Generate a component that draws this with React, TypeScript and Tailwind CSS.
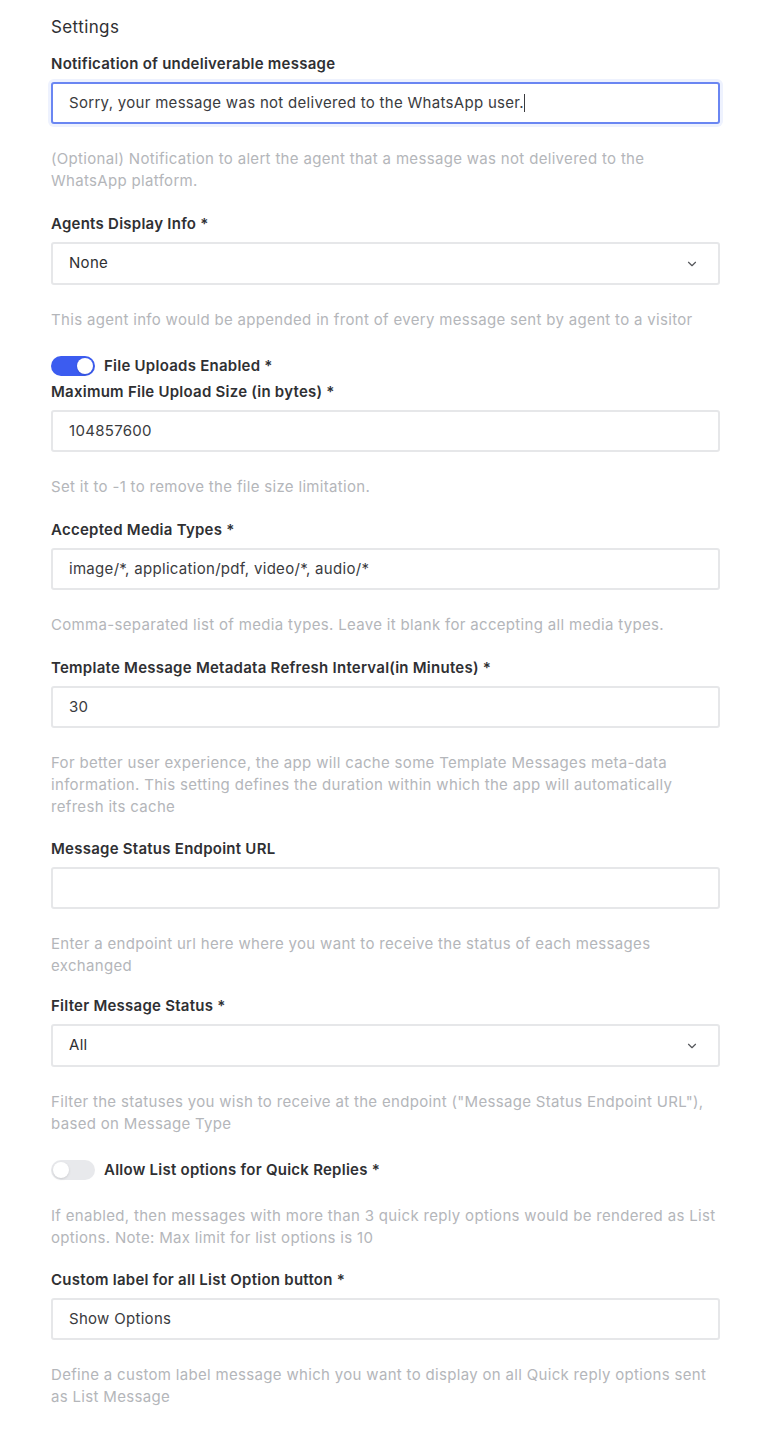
import { ChevronDown } from 'lucide-react';

interface FieldProps {
  label: string;
  help?: string;
  children: React.ReactNode;
}

const helpCls = 'text-[15px] leading-[22px] tracking-[0.32px] text-[#b4b6ba]';

const Field = ({ label, help, children }: FieldProps) => {
  return (
    <div className="flex flex-col">
      <label className="text-[15px] leading-5 font-semibold tracking-[0.25px] text-[#2f3033] mb-2">
        {label}
      </label>
      {children}
      {help && <p className={`mt-6 ${helpCls}`}>{help}</p>}
    </div>
  );
};

const TextInput = ({ value, focused }: { value: string; focused?: boolean }) => {
  return (
    <div
      className={
        focused
          ? 'h-[42px] flex items-center px-[16px] rounded-[3px] border-2 border-[#6a86f2] shadow-[0_0_0_3px_#eef2fe] bg-white'
          : 'h-[42px] flex items-center px-[16px] rounded-[3px] border-2 border-[#e6e7e9] bg-white'
      }>
      <span className="text-[15px] tracking-[0.3px] text-[#3a3b3e]">{value}</span>
      {focused && <span className="w-px h-[18px] bg-[#3a3b3e]" />}
    </div>
  );
};

const SelectInput = ({ value }: { value: string }) => {
  return (
    <div className="h-[43px] flex items-center justify-between px-[16px] rounded-[3px] border-2 border-[#e6e7e9] bg-white">
      <span className="text-[15px] tracking-[0.3px] text-[#2f3033]">{value}</span>
      <ChevronDown size={14} strokeWidth={2} className="text-[#55575b] mr-[3px]" />
    </div>
  );
};

const Toggle = ({ on, label }: { on: boolean; label: string }) => {
  return (
    <div className="flex items-center gap-[9px] h-5">
      <div
        className={
          on
            ? 'w-[44px] h-[20px] rounded-full bg-[#3c5cf0] flex items-center justify-end p-[2px]'
            : 'w-[44px] h-[20px] rounded-full bg-[#e8e9ec] flex items-center justify-start p-[2px]'
        }>
        <div className="w-[16px] h-[16px] rounded-full bg-white shadow-sm" />
      </div>
      <span className="text-[15px] font-semibold tracking-[0.25px] text-[#2f3033]">{label}</span>
    </div>
  );
};

const App = () => {
  return (
    <div
      className="w-[766px] min-h-[1448px] bg-white pl-[51px] pr-[46px] pt-[16px]"
      style={{ fontFamily: 'Inter, "Noto Sans", sans-serif' }}>
      <h2 className="text-[17px] leading-[22px] tracking-[0.4px] text-[#2f3033] mb-[16px]">
        Settings
      </h2>

      <div className="flex flex-col">
        <Field
          label="Notification of undeliverable message"
          help="(Optional) Notification to alert the agent that a message was not delivered to the WhatsApp platform.">
          <TextInput value="Sorry, your message was not delivered to the WhatsApp user." focused />
        </Field>

        <div className="mt-[22px]">
          <Field
            label="Agents Display Info *"
            help="This agent info would be appended in front of every message sent by agent to a visitor">
            <SelectInput value="None" />
          </Field>
        </div>

        <div className="mt-[25px]">
          <Toggle on label="File Uploads Enabled *" />
        </div>

        <div className="mt-[6px]">
          <Field
            label="Maximum File Upload Size (in bytes) *"
            help="Set it to -1 to remove the file size limitation.">
            <TextInput value="104857600" />
          </Field>
        </div>

        <div className="mt-[22px]">
          <Field
            label="Accepted Media Types *"
            help="Comma-separated list of media types. Leave it blank for accepting all media types.">
            <TextInput value="image/*, application/pdf, video/*, audio/*" />
          </Field>
        </div>

        <div className="mt-[22px]">
          <Field
            label="Template Message Metadata Refresh Interval(in Minutes) *"
            help="For better user experience, the app will cache some Template Messages meta-data information. This setting defines the duration within which the app will automatically refresh its cache">
            <TextInput value="30" />
          </Field>
        </div>

        <div className="mt-[21px]">
          <Field
            label="Message Status Endpoint URL"
            help="Enter a endpoint url here where you want to receive the status of each messages exchanged">
            <TextInput value="" />
          </Field>
        </div>

        <div className="mt-[19px]">
          <Field
            label="Filter Message Status *"
            help='Filter the statuses you wish to receive at the endpoint ("Message Status Endpoint URL"), based on Message Type'>
            <SelectInput value="All" />
          </Field>
        </div>

        <div className="mt-[25px]">
          <Toggle on={false} label="Allow List options for Quick Replies *" />
          <p className={`mt-[25px] ${helpCls}`}>
            If enabled, then messages with more than 3 quick reply options would be rendered as List
            options. Note: Max limit for list options is 10
          </p>
        </div>

        <div className="mt-[21px]">
          <Field
            label="Custom label for all List Option button *"
            help="Define a custom label message which you want to display on all Quick reply options sent as List Message">
            <TextInput value="Show Options" />
          </Field>
        </div>
      </div>
    </div>
  );
};

export default App;
